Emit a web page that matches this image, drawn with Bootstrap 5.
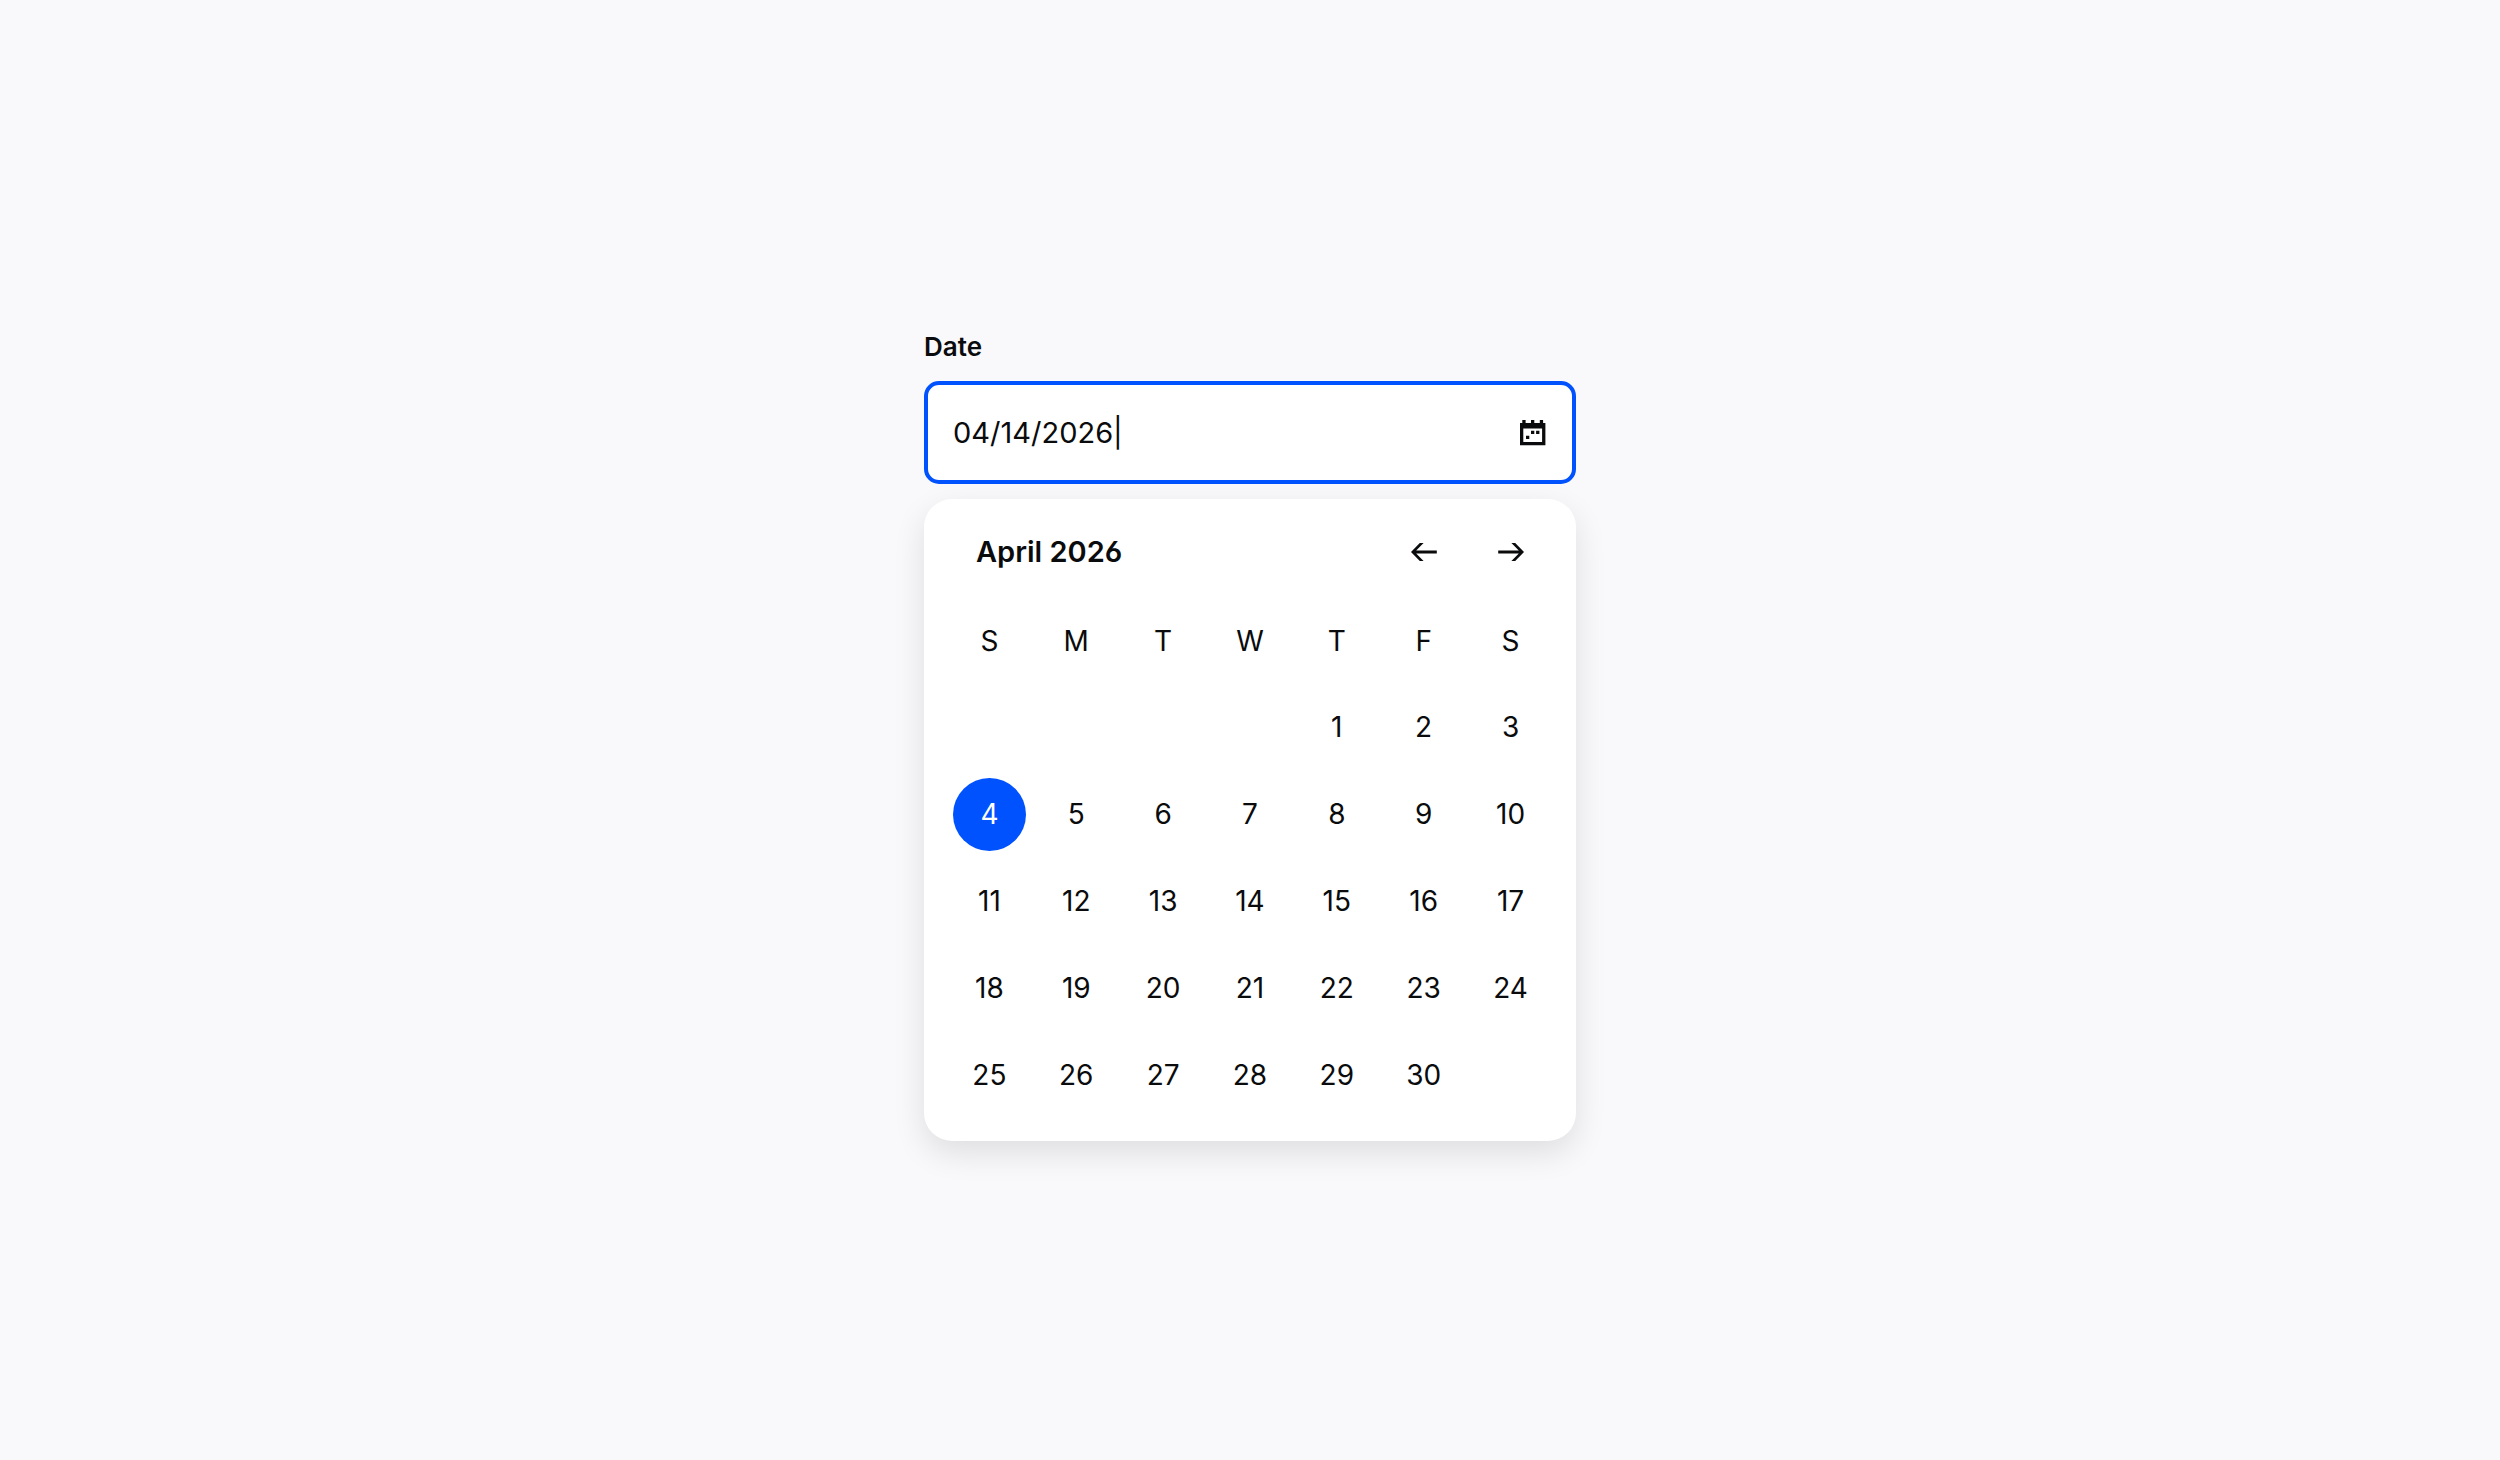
<!DOCTYPE html>
<html lang="en">
<head>
<meta charset="utf-8">
<meta name="viewport" content="width=device-width, initial-scale=1">
<title>Date picker</title>
<link href="https://cdn.jsdelivr.net/npm/bootstrap@5.3.0/dist/css/bootstrap.min.css" rel="stylesheet">
<style>
  :root { --ink: #0a0b0d; --brand: #0052ff; --page: #f9f9fb; }
  body {
    background: var(--page);
    color: var(--ink);
    font-family: Inter, "Liberation Sans", sans-serif;
    font-size: 28px;
    /* flat-top three, open six and nine, plain one */
    font-feature-settings: "cv01", "cv03", "cv04", "cv09";
  }
  .picker { max-width: 652px; }
  .picker-label { font-size: 26px; line-height: 56px; margin-bottom: 6px; }
  .picker-field {
    height: 103px;
    border: 4px solid var(--brand);
    border-radius: 15px;
    padding: 0 26px 0 25px;
  }
  .picker-input, .picker-input:focus {
    font-size: 29px;
    color: var(--ink);
    background: transparent;
    box-shadow: none;
  }
  .picker-panel {
    margin-top: 15px;
    padding: 8px 22px 22px;
    border-radius: 28px;
    box-shadow: 0 12px 32px rgba(10, 11, 13, .11);
  }
  .picker-head { height: 90px; padding-left: 30px; }
  .picker-title { font-size: 29px; }
  .picker-nav { width: 87px; height: 73px; }
  .picker-grid { table-layout: fixed; }
  .picker-grid th, .picker-grid td { height: 87px; padding: 0; }
  .picker-day {
    width: 73px;
    height: 73px;
    font-size: 28px;
    line-height: 73px;
    color: var(--ink);
  }
  .picker-day:hover { background: #eef0f3; }
  .picker-day[aria-pressed="true"] { background: var(--brand); color: #fff; }
</style>
</head>
<body>
<main class="min-vh-100 d-flex align-items-center justify-content-center">
  <div class="picker w-100">
    <label class="picker-label d-block fw-semibold" for="date">Date</label>
    <div class="picker-field bg-white d-flex align-items-center">
      <input class="picker-input form-control border-0 rounded-0 p-0" id="date" type="text" value="04/14/2026|">
      <button class="btn border-0 p-0 d-flex flex-shrink-0" type="button" aria-label="Open calendar">
        <svg width="26" height="26" viewBox="0 0 26 26" fill="#0a0b0d" aria-hidden="true">
          <path fill-rule="evenodd" d="M0 3H2.3V0H5.6V3H11V0H14.3V3H19.8V0H23.1V3H25.4V25.3H0ZM3.3 8.6V21.9H22.1V8.6Z"/>
          <path d="M11 10.7h3.3V14H11zM16.1 10.7h3.3V14h-3.3zM6 15.7h3.3V19H6z"/>
        </svg>
      </button>
    </div>
    <section class="picker-panel bg-white" aria-label="Calendar">
      <div class="picker-head d-flex align-items-center">
        <h2 class="picker-title fw-semibold mb-0 me-auto">April 2026</h2>
        <button class="picker-nav btn border-0 p-0 d-flex align-items-center justify-content-center" type="button" aria-label="Previous month">
          <svg width="26" height="18" viewBox="0 0 26 18" fill="#0a0b0d" aria-hidden="true"><path d="M0 9L8.8 0H12.6L5.2 7.6H25.8V10.4H5.2L12.6 18H8.8Z"/></svg>
        </button>
        <button class="picker-nav btn border-0 p-0 d-flex align-items-center justify-content-center" type="button" aria-label="Next month">
          <svg width="26" height="18" viewBox="0 0 26 18" fill="#0a0b0d" aria-hidden="true"><path d="M26 9L17.2 0H13.4L20.8 7.6H.2V10.4H20.8L13.4 18H17.2Z"/></svg>
        </button>
      </div>
      <table class="picker-grid w-100 text-center align-middle">
        <thead>
          <tr>
            <th class="fw-normal" scope="col">S</th><th class="fw-normal" scope="col">M</th><th class="fw-normal" scope="col">T</th><th class="fw-normal" scope="col">W</th><th class="fw-normal" scope="col">T</th><th class="fw-normal" scope="col">F</th><th class="fw-normal" scope="col">S</th>
          </tr>
        </thead>
        <tbody id="days"></tbody>
      </table>
    </section>
  </div>
</main>
<script src="https://cdn.jsdelivr.net/npm/bootstrap@5.3.0/dist/js/bootstrap.bundle.min.js"></script>
<script>
  const firstColumn = 4, dayCount = 30, selected = 4;
  const body = document.getElementById('days');
  for (let start = 1 - firstColumn; start <= dayCount; start += 7) {
    const row = body.insertRow();
    for (let day = start; day < start + 7; day++) {
      const cell = row.insertCell();
      if (day < 1 || day > dayCount) continue;
      const button = document.createElement('button');
      button.type = 'button';
      button.className = 'picker-day btn border-0 rounded-circle p-0 d-block mx-auto';
      button.setAttribute('aria-pressed', day === selected);
      button.textContent = day;
      cell.append(button);
    }
  }
</script>
</body>
</html>
